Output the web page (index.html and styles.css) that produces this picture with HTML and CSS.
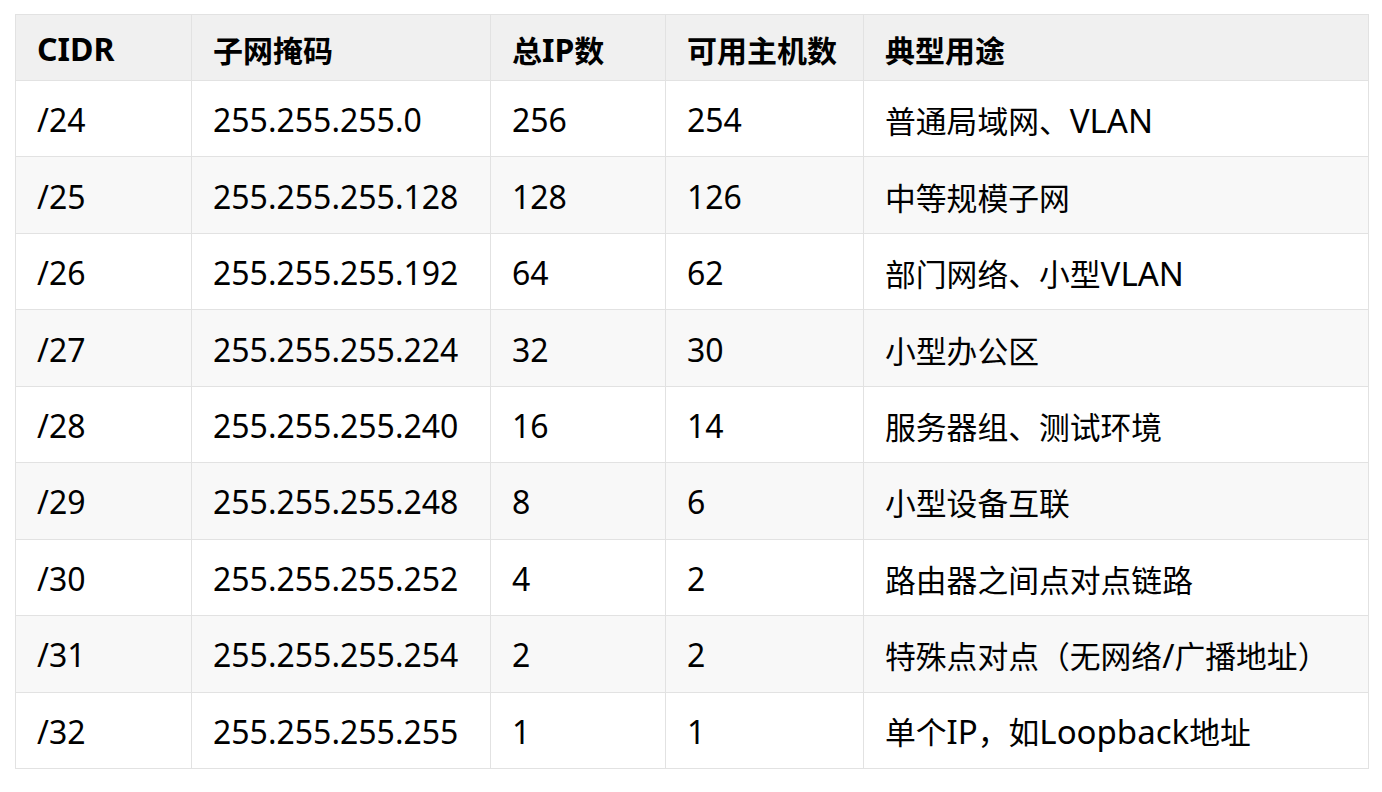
FILE: index.html
```html
<!DOCTYPE html>
<html lang="zh-CN">
<head>
<meta charset="utf-8">
<title>CIDR 子网表</title>
<link rel="stylesheet" href="styles.css">
</head>
<body>
<div class="page">
<table class="cidr-table">
<colgroup>
<col class="c1"><col class="c2"><col class="c3"><col class="c4"><col class="c5">
</colgroup>
<thead>
<tr><th class="num">CIDR</th><th>子网掩码</th><th>总<span class="lat">IP</span>数</th><th>可用主机数</th><th>典型用途</th></tr>
</thead>
<tbody>
<tr><td class="num">/24</td><td class="num">255.255.255.0</td><td class="num">256</td><td class="num">254</td><td>普通局域网、<span class="lat">VLAN</span></td></tr>
<tr><td class="num">/25</td><td class="num">255.255.255.128</td><td class="num">128</td><td class="num">126</td><td>中等规模子网</td></tr>
<tr><td class="num">/26</td><td class="num">255.255.255.192</td><td class="num">64</td><td class="num">62</td><td>部门网络、小型<span class="lat">VLAN</span></td></tr>
<tr><td class="num">/27</td><td class="num">255.255.255.224</td><td class="num">32</td><td class="num">30</td><td>小型办公区</td></tr>
<tr><td class="num">/28</td><td class="num">255.255.255.240</td><td class="num">16</td><td class="num">14</td><td>服务器组、测试环境</td></tr>
<tr><td class="num">/29</td><td class="num">255.255.255.248</td><td class="num">8</td><td class="num">6</td><td>小型设备互联</td></tr>
<tr><td class="num">/30</td><td class="num">255.255.255.252</td><td class="num">4</td><td class="num">2</td><td>路由器之间点对点链路</td></tr>
<tr><td class="num">/31</td><td class="num">255.255.255.254</td><td class="num">2</td><td class="num">2</td><td>特殊点对点（无网络<span class="lat">/</span>广播地址）</td></tr>
<tr><td class="num">/32</td><td class="num">255.255.255.255</td><td class="num">1</td><td class="num">1</td><td>单个<span class="lat">IP</span>，如<span class="lat">Loopback</span>地址</td></tr>
</tbody>
</table>
</div>
</body>
</html>
```

FILE: styles.css
```css
html, body {
  margin: 0;
  padding: 0;
  background: #ffffff;
}

.page {
  padding: 14px 14px 0 15px;
}

.cidr-table {
  border-collapse: collapse;
  width: 1353px;
  table-layout: fixed;
  font-family: "Noto Sans", "Noto Sans CJK SC", sans-serif;
  font-size: 30px;
  color: #000000;
}

.c1 { width: 176px; }
.c2 { width: 299px; }
.c3 { width: 175px; }
.c4 { width: 198px; }
.c5 { width: 505px; }

.cidr-table th,
.cidr-table td {
  border: 1px solid #e2e2e2;
  text-align: left;
  padding: 2px 0 0 21px;
  white-space: nowrap;
  vertical-align: middle;
}

.cidr-table th {
  background: #f0f0f0;
  font-weight: 700;
  height: 63px;
}

.cidr-table td {
  height: 73.44px;
  font-weight: 400;
  font-size: 30.8px;
}

.cidr-table .num {
  font-size: 32px;
}

.cidr-table th .lat {
  font-size: 32px;
}

.cidr-table td .lat {
  font-size: 33px;
}

.cidr-table tbody tr:nth-child(even) td {
  background: #f8f8f8;
}
```
